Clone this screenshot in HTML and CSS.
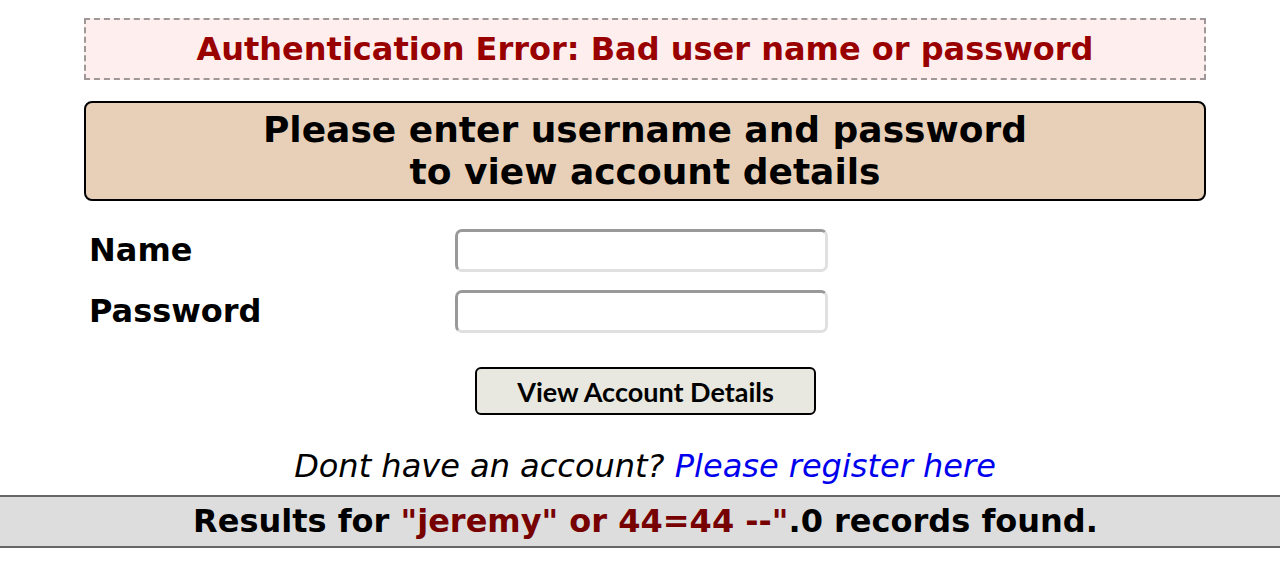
FILE: index.html
```html
<!DOCTYPE html>
<html lang="en">
<head>
    <meta charset="UTF-8">
    <title>Login</title>
    <link rel="stylesheet" href="styles.css">
</head>
<body>
    <div class="page">
        <!-- error message -->
        <div class="error-box">Authentication Error: Bad user name or password</div>

        <div class="form-header">Please enter username and password<br>to view account details</div>

        <form class="login-form">
            <div class="form-row">
                <label class="form-label">Name</label>
                <input class="form-input" type="text">
            </div>
            <div class="form-row">
                <label class="form-label">Password</label>
                <input class="form-input" type="password">
            </div>
            <div class="button-row">
                <button class="submit-button" type="button">View Account Details</button>
            </div>
        </form>

        <p class="register">Dont have an account? <a href="#">Please register here</a></p>
    </div>

    <div class="results">Results for <span class="query">"jeremy" or 44=44 --"</span>.0 records found.</div>
</body>
</html>
```

FILE: styles.css
```css
body {
    margin: 0;
    font-family: "DejaVu Sans", sans-serif;
    color: #000;
    background-color: #fff;
}

.page {
    width: 1122px;
    margin-left: 84px;
    padding-top: 18px;
}

.error-box {
    height: 62px;
    box-sizing: border-box;
    border: 2px dashed #a09898;
    background-color: #ffeeee;
    color: #990000;
    font-weight: bold;
    font-size: 32px;
    display: flex;
    align-items: center;
    justify-content: center;
}

.form-header {
    margin-top: 21px;
    height: 100px;
    box-sizing: border-box;
    border: 2px solid #000;
    border-radius: 8px;
    background-color: #e8d0b8;
    font-weight: bold;
    font-size: 36px;
    line-height: 42px;
    text-align: center;
    padding-top: 6px;
}

.login-form {
    margin-top: 28px;
}

.form-row {
    display: flex;
    align-items: center;
    margin-bottom: 18px;
}

.form-label {
    width: 366px;
    padding-left: 5px;
    font-weight: bold;
    font-size: 32px;
    position: relative;
    top: -1px;
}

.form-input {
    width: 373px;
    height: 43px;
    box-sizing: border-box;
    border: 3px solid;
    border-color: #999 #e0e0e0 #e0e0e0 #999;
    border-radius: 7px;
    font-size: 20px;
}

.button-row {
    padding-left: 391px;
    margin-top: 34px;
    display: flex;
}

.submit-button {
    width: 341px;
    height: 48px;
    border: 2px solid #000;
    border-radius: 6px;
    background-color: #e8e8e0;
    font-family: "Lato", sans-serif;
    font-weight: bold;
    font-size: 27px;
    color: #000;
}

.register {
    margin: 32px 0 0;
    text-align: center;
    font-style: italic;
    font-size: 32px;
    line-height: 38px;
}

.register a {
    color: #0000ee;
    text-decoration: none;
}

.results {
    margin-top: 10px;
    padding-left: 11px;
    border-top: 2px solid #666;
    border-bottom: 2px solid #666;
    background-color: #dddddd;
    text-align: center;
    font-weight: bold;
    font-size: 32px;
    height: 49px;
    line-height: 49px;
}

.query {
    color: #770000;
}
```
